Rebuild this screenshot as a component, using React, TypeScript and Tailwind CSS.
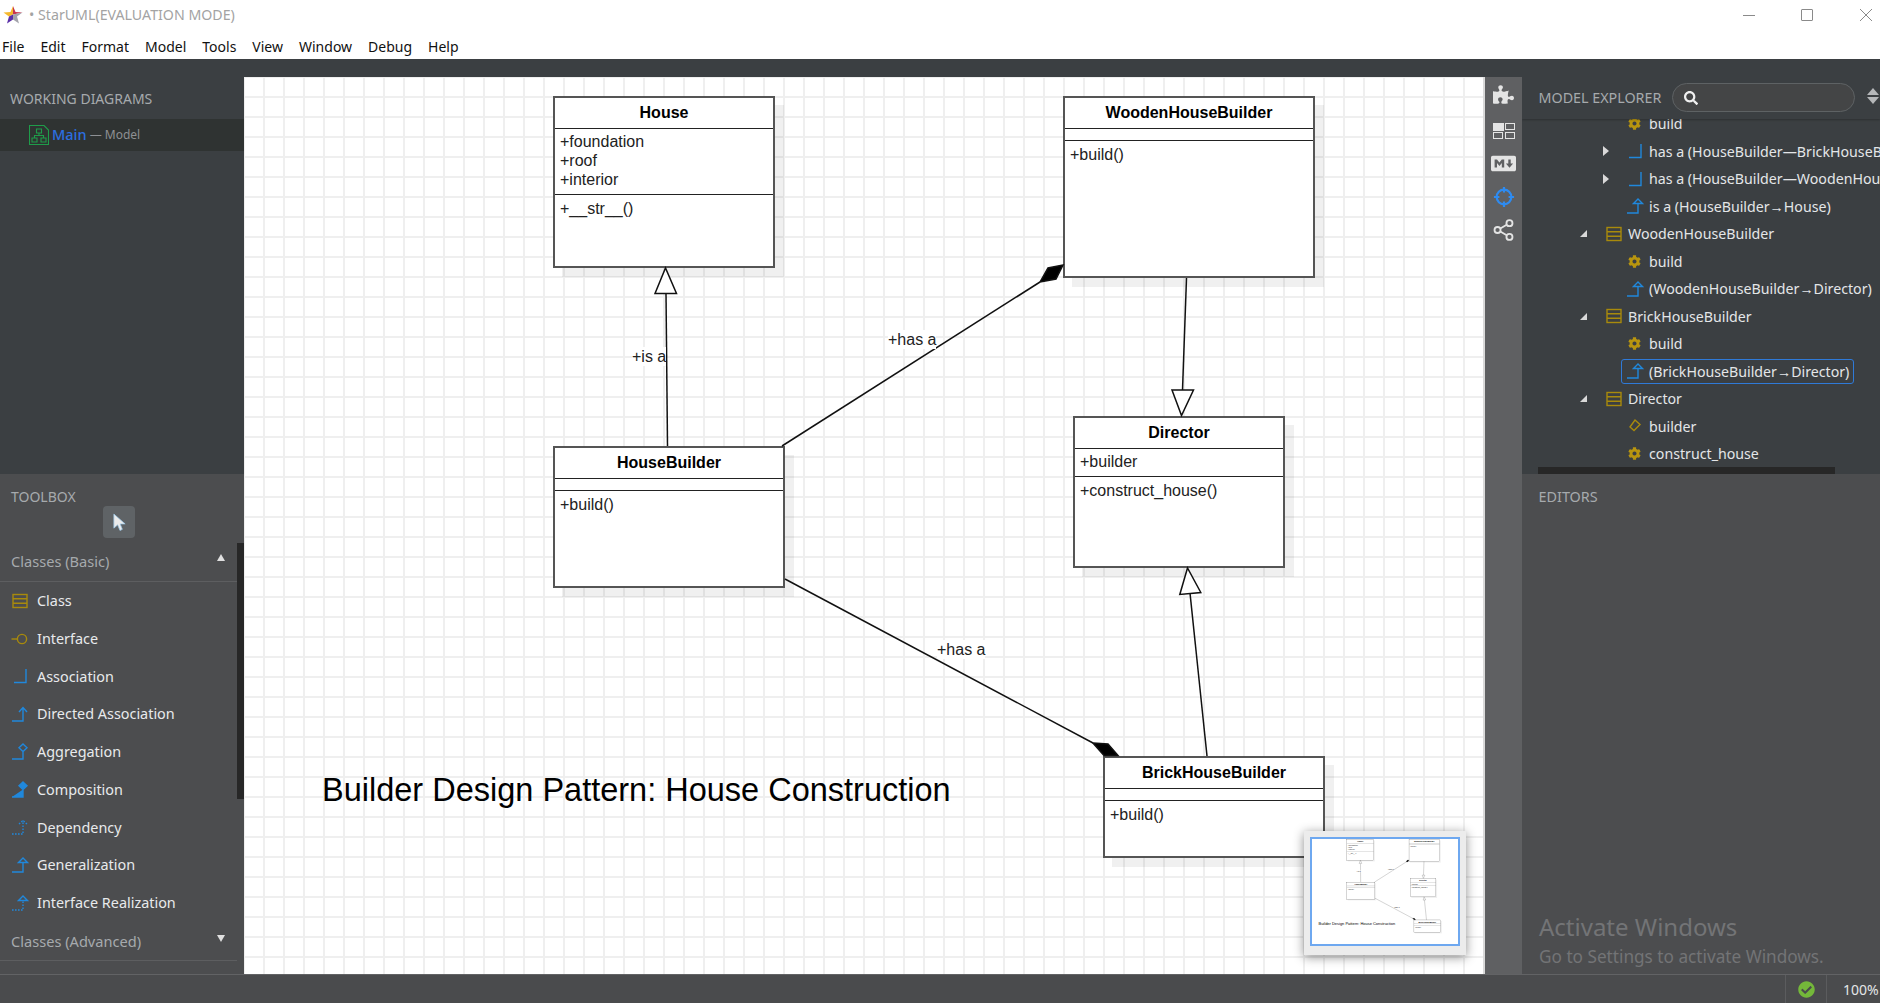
import { FaCheckCircle, FaCog, FaMarkdown, FaPuzzlePiece, FaSearch } from "react-icons/fa";

const ui = "font-['Noto_Sans',sans-serif]";
const arial = "font-['Liberation_Sans',Arial,sans-serif]";

const menus = ["File", "Edit", "Format", "Model", "Tools", "View", "Window", "Debug", "Help"];

const StarLogo = () => (
  <svg viewBox="0 0 20 20" className="w-[20px] h-[20px]">
    <polygon points="10,1 10,9.5 6,11.5 0.5,7.5 7.5,7" fill="#f5b82e" />
    <polygon points="10,1 12.5,7 19.5,7.5 10,9.5" fill="#c8344e" />
    <polygon points="19.5,7.5 14,11.5 16,18.5 10,14.5 10,9.5" fill="#a3a3ab" />
    <polygon points="6,11.5 4,18.5 10,14.5 10,9.5" fill="#5a2fa8" />
  </svg>
);

type IconKind = "class" | "interface" | "assoc" | "directed" | "aggregation" | "composition" | "dependency" | "generalization" | "realization" | "attr";

const ModelIcon = ({ kind }: { kind: IconKind }) => {
  const blue = "#2088dc";
  const gold = "#a88a0c";
  return (
    <svg viewBox="0 0 20 20" className="w-[20px] h-[20px] shrink-0" fill="none" strokeWidth="1.4">
      {kind === "class" && (
        <g stroke={gold}>
          <rect x="3" y="3.5" width="14" height="13" />
          <path d="M3 7.8H17M3 12.2H17" />
        </g>
      )}
      {kind === "interface" && (
        <g stroke={gold}>
          <path d="M1.5 10H7" />
          <circle cx="12" cy="10" r="4.6" />
        </g>
      )}
      {kind === "assoc" && <path d="M4 16.5H16V3" stroke={blue} />}
      {kind === "directed" && <path d="M2 17H13V3.5M9 8L13 3.5L17 8" stroke={blue} />}
      {kind === "aggregation" && <path d="M2 17H13V9.5M13 2L17 5.8L13 9.5L9 5.8Z" stroke={blue} />}
      {kind === "composition" && <path d="M2 17H13V9.5M13 2L17 5.8L13 9.5L9 5.8Z" stroke={blue} fill={blue} />}
      {kind === "dependency" && <path d="M2 17H13V3.5M9 7L13 3.5L17 7" stroke={blue} strokeDasharray="1.6 1.4" />}
      {kind === "generalization" && <path d="M2 17H13V7.5M8.5 7.5L13 3L17.5 7.5Z" stroke={blue} />}
      {kind === "realization" && (
        <g stroke={blue}>
          <path d="M2 17H13V7.5" strokeDasharray="1.6 1.4" />
          <path d="M8.5 7.5L13 3L17.5 7.5Z" />
        </g>
      )}
      {kind === "attr" && <path d="M10 4L15 8.5L9 14.5L5 11Z" stroke={gold} />}
    </svg>
  );
};

const toolItems: { label: string; icon: IconKind }[] = [
  { label: "Class", icon: "class" },
  { label: "Interface", icon: "interface" },
  { label: "Association", icon: "assoc" },
  { label: "Directed Association", icon: "directed" },
  { label: "Aggregation", icon: "aggregation" },
  { label: "Composition", icon: "composition" },
  { label: "Dependency", icon: "dependency" },
  { label: "Generalization", icon: "generalization" },
  { label: "Interface Realization", icon: "realization" },
];

type TreeRow = {
  label: string;
  level: 2 | 3;
  icon: IconKind | "gear";
  toggle?: "open" | "closed";
  selected?: boolean;
};

const treeRows: TreeRow[] = [
  { label: "build", level: 3, icon: "gear" },
  { label: "has a (HouseBuilder—BrickHouseBuilder)", level: 3, icon: "assoc", toggle: "closed" },
  { label: "has a (HouseBuilder—WoodenHouseBuilder)", level: 3, icon: "assoc", toggle: "closed" },
  { label: "is a (HouseBuilder→House)", level: 3, icon: "generalization" },
  { label: "WoodenHouseBuilder", level: 2, icon: "class", toggle: "open" },
  { label: "build", level: 3, icon: "gear" },
  { label: "(WoodenHouseBuilder→Director)", level: 3, icon: "generalization" },
  { label: "BrickHouseBuilder", level: 2, icon: "class", toggle: "open" },
  { label: "build", level: 3, icon: "gear" },
  { label: "(BrickHouseBuilder→Director)", level: 3, icon: "generalization", selected: true },
  { label: "Director", level: 2, icon: "class", toggle: "open" },
  { label: "builder", level: 3, icon: "attr" },
  { label: "construct_house", level: 3, icon: "gear" },
];

const UmlBox = ({
  name,
  attrs,
  ops,
  className,
}: {
  name: string;
  attrs: string[];
  ops: string[];
  className: string;
}) => (
  <div className={`absolute flex flex-col bg-white border-2 border-[#555] shadow-[9px_9px_0_rgba(0,0,0,0.06)] text-[16px] leading-[19px] text-[#222] ${className}`}>
    <div className="h-[31px] shrink-0 flex items-center justify-center pb-[2px] font-bold text-black border-b border-[#222]">
      {name}
    </div>
    <div className={`shrink-0 px-[5px] border-b border-[#222] ${attrs.length ? "pt-[3px] pb-[5px]" : "h-[12px]"}`}>
      {attrs.map((a) => (
        <div key={a}>{a}</div>
      ))}
    </div>
    <div className="px-[5px] py-[4px]">
      {ops.map((o) => (
        <div key={o}>{o}</div>
      ))}
    </div>
  </div>
);

const EdgeLabel = ({ text, className }: { text: string; className: string }) => (
  <div className={`absolute bg-white text-[16px] leading-[19px] text-[#222] ${className}`}>{text}</div>
);

// the class diagram, drawn at canvas size and reused (scaled) by the minimap
const Diagram = () => (
  <div className={`absolute left-0 top-0 w-[1241px] h-[897px] ${arial}`}>
    <UmlBox
      name="House"
      attrs={["+foundation", "+roof", "+interior"]}
      ops={["+__str__()"]}
      className="left-[309px] top-[19px] w-[222px] h-[172px]"
    />
    <UmlBox name="WoodenHouseBuilder" attrs={[]} ops={["+build()"]} className="left-[819px] top-[19px] w-[252px] h-[182px]" />
    <UmlBox name="HouseBuilder" attrs={[]} ops={["+build()"]} className="left-[309px] top-[369px] w-[232px] h-[142px]" />
    <UmlBox
      name="Director"
      attrs={["+builder"]}
      ops={["+construct_house()"]}
      className="left-[829px] top-[339px] w-[212px] h-[152px]"
    />
    <UmlBox name="BrickHouseBuilder" attrs={[]} ops={["+build()"]} className="left-[859px] top-[679px] w-[222px] h-[102px]" />
    <svg viewBox="244 77 1241 897" className="absolute inset-0 w-[1241px] h-[897px]" fill="none" stroke="#111" strokeWidth="1.5">
      <path d="M666 293L667.5 446" />
      <path d="M655 293.5L665.5 268L676.5 293.5Z" fill="#fff" />
      <path d="M782 446L1040 282" />
      <path d="M1040 282L1048 268L1063 265L1056 279Z" fill="#000" />
      <path d="M1186.5 278L1182.5 390" />
      <path d="M1172 390L1193.5 390L1181.5 415.5Z" fill="#fff" />
      <path d="M1190 593L1207 756" />
      <path d="M1187.5 568L1179.8 594.5L1200.8 592.5Z" fill="#fff" />
      <path d="M785 579L1093 743" />
      <path d="M1093 743L1108 744L1118 755.5L1104 755.5Z" fill="#000" />
    </svg>
    <EdgeLabel text="+is a" className="left-[388px] top-[270px]" />
    <EdgeLabel text="+has a" className="left-[644px] top-[253px]" />
    <EdgeLabel text="+has a" className="left-[693px] top-[563px]" />
    <div className="absolute left-[78px] top-[691px] text-[32.5px] leading-[44px] text-black whitespace-nowrap">
      Builder Design Pattern: House Construction
    </div>
  </div>
);

const Minimap = () => (
  <div className="absolute left-[1060px] top-[754px] w-[162px] h-[124px] bg-[#ececec] shadow-[0_2px_10px_rgba(0,0,0,0.45)] pl-[6px] pt-[6px]">
    <div className="relative w-[150px] h-[109px] bg-white border-2 border-[#6ea8f0] overflow-hidden">
      <div className="absolute left-[-3px] top-[-2px] w-[1241px] h-[897px] origin-top-left scale-[0.122]">
        <Diagram />
      </div>
    </div>
  </div>
);

const ToolRail = () => (
  <div className="w-[37px] bg-[#5f6062] flex flex-col items-center pt-[7px] text-[#e4e4e4]">
    <div className="h-[20px] flex items-center">
      <FaPuzzlePiece size={21} />
    </div>
    <svg viewBox="0 0 22 16" className="w-[22px] h-[16px] mt-[19px]" fill="none" stroke="#e4e4e4">
      <rect x="0.5" y="0.5" width="10" height="7" fill="#e4e4e4" />
      <rect x="12.5" y="0.5" width="9" height="6" />
      <rect x="0.5" y="9.5" width="9" height="6" />
      <rect x="12.5" y="9.5" width="9" height="6" />
    </svg>
    <div className="h-[20px] flex items-center mt-[14px]">
      <FaMarkdown size={25} />
    </div>
    <svg viewBox="0 0 24 24" className="w-[22px] h-[22px] mt-[13px]" fill="none" stroke="#2e8bf0" strokeWidth="2.4">
      <circle cx="12" cy="12" r="8" />
      <path d="M12 1V7M12 17V23M1 12H7M17 12H23" />
    </svg>
    <svg viewBox="0 0 22 24" className="w-[21px] h-[22px] mt-[11px]" fill="none" stroke="#e4e4e4" strokeWidth="2">
      <circle cx="17.5" cy="4.5" r="3.3" />
      <circle cx="4.5" cy="12" r="3.3" />
      <circle cx="17.5" cy="19.5" r="3.3" />
      <path d="M7.5 10.3L14.5 6.2M7.5 13.7L14.5 17.8" />
    </svg>
  </div>
);

const TreeLine = ({ row }: { row: TreeRow }) => (
  <div className={`h-[27.5px] flex items-center whitespace-nowrap ${row.level === 3 ? "pl-[78px]" : "pl-[57px]"}`}>
    <div className="w-[28px] shrink-0 flex items-center">
      {row.toggle === "closed" && (
        <div className="ml-[3px] w-0 h-0 border-y-[5px] border-y-transparent border-l-[6px] border-l-[#d9d9d9]" />
      )}
      {row.toggle === "open" && (
        <div className="ml-[1px] w-0 h-0 border-b-[7px] border-b-[#d9d9d9] border-l-[7px] border-l-transparent" />
      )}
    </div>
    <div
      className={`flex items-center h-[25px] ${
        row.selected ? "w-[233px] -ml-[7px] pl-[6px] border border-[#2f7ad8] rounded-[3px]" : ""
      }`}
    >
      <div className="w-[21px] shrink-0 flex items-center">
        {row.icon === "gear" ? (
          <FaCog size={13} className="text-[#b8950f]" />
        ) : (
          <div className="-ml-[3px]">
            <ModelIcon kind={row.icon} />
          </div>
        )}
      </div>
      <span className="text-[14.2px] text-[#e4e6e8]">{row.label}</span>
    </div>
  </div>
);

export default function App() {
  return (
    <div className={`w-[1880px] h-[1003px] flex flex-col overflow-hidden bg-white ${ui}`}>
      {/* title bar */}
      <div className="h-[30px] shrink-0 flex items-center pl-[3px]">
        <StarLogo />
        <span className="ml-[6px] text-[14.2px] text-[#a3a3a3]">• StarUML(EVALUATION MODE)</span>
        <div className="ml-auto flex items-center">
          <div className="w-[12px] h-px bg-[#8a8a8a]" />
          <div className="ml-[46px] w-[12px] h-[12px] border border-[#8a8a8a] rounded-[1px]" />
          <svg viewBox="0 0 12 12" className="ml-[47px] mr-[8px] w-[12px] h-[12px]" stroke="#8a8a8a">
            <path d="M0 0L12 12M12 0L0 12" />
          </svg>
        </div>
      </div>

      {/* menu bar */}
      <div className="h-[29px] shrink-0 flex items-center gap-[16px] pl-[2px] pt-[4px] text-[14px] text-[#111]">
        {menus.map((m) => (
          <span key={m}>{m}</span>
        ))}
      </div>

      <div className="flex-1 flex min-h-0">
        {/* left column */}
        <div className="w-[244px] shrink-0 flex flex-col">
          <div className="h-[415px] shrink-0 bg-[#3b3f42] pt-[30px]">
            <div className="pl-[10px] mb-[10px] text-[14px] leading-[20px] text-[#a6aaad]">WORKING DIAGRAMS</div>
            <div className="h-[32px] bg-[#2f3332] flex items-center pl-[29px] whitespace-nowrap">
              <svg viewBox="0 0 20 20" className="w-[20px] h-[20px]" fill="none" stroke="#1f9c4a" strokeWidth="1.1">
                <path d="M0.5 0.5H15L19.5 5V19.5H0.5Z" />
                <path d="M7.5 4H12.5V8H7.5ZM3 13H8V17H3ZM12 13H17V17H12ZM10 8V10.5M5.5 13V10.5H14.5V13" />
              </svg>
              <span className="ml-[3px] text-[14.5px] font-medium text-[#2b6fe0]">Main</span>
              <span className="ml-[3px] text-[12px] text-[#8e9093]">— Model</span>
            </div>
          </div>

          <div className="relative flex-1 min-h-0 bg-[#4c4d4f] overflow-hidden">
            <div className="pl-[11px] pt-[13px] text-[14px] leading-[20px] text-[#a6aaad]">TOOLBOX</div>
            <div className="ml-[103px] mt-[-1px] w-[32px] h-[32px] rounded-[4px] bg-[#5f6366] flex items-center justify-center">
              <svg viewBox="0 0 16 20" className="w-[15px] h-[19px]" fill="#ececec" stroke="#9cc8e8" strokeWidth="0.8">
                <path d="M2 1V16L6 12.5L8.5 18.5L11 17.3L8.7 11.5H14Z" />
              </svg>
            </div>
            <div className="w-[237px]">
              <div className="h-[44px] flex items-center justify-between pl-[11px] pr-[12px] pt-[4px] border-b border-[#5d5e60] text-[14.6px] text-[#a6aaad]">
                <span>Classes (Basic)</span>
                <span className="w-0 h-0 mb-[8px] border-x-[4px] border-x-transparent border-b-[7px] border-b-[#e0e0e0]" />
              </div>
              {toolItems.map((t) => (
                <div key={t.label} className="h-[37.75px] flex items-center pl-[10px] whitespace-nowrap">
                  <ModelIcon kind={t.icon} />
                  <span className="ml-[7px] text-[14.4px] text-[#e8eaec]">{t.label}</span>
                </div>
              ))}
              <div className="h-[39px] flex items-center justify-between pl-[11px] pr-[12px] pt-[3px] border-b border-[#5d5e60] text-[14.6px] text-[#a6aaad]">
                <span>Classes (Advanced)</span>
                <span className="w-0 h-0 mb-[8px] border-x-[4px] border-x-transparent border-t-[7px] border-t-[#e0e0e0]" />
              </div>
            </div>
            <div className="absolute right-0 top-[69px] w-[7px] h-[256px] bg-[#272727]" />
          </div>
        </div>

        {/* center column */}
        <div className="w-[1278px] shrink-0 flex flex-col">
          <div className="h-[18px] shrink-0 bg-[#3b3f42]" />
          <div className="flex-1 min-h-0 flex">
            <div className="relative w-[1241px] overflow-hidden border-r-2 border-[#d9d9d9] bg-white bg-[linear-gradient(to_right,#efefef_2px,transparent_2px),linear-gradient(to_bottom,#efefef_2px,transparent_2px)] bg-[size:20px_20px] bg-[position:19px_19px]">
              <Diagram />
              <Minimap />
            </div>
            <ToolRail />
          </div>
        </div>

        {/* right column */}
        <div className="flex-1 min-w-0 flex flex-col">
          <div className="relative h-[415px] shrink-0 bg-[#3b3f42] flex flex-col overflow-hidden">
            <div className="relative z-10 h-[60px] shrink-0 bg-[#3b3f42] shadow-[0_1px_2px_rgba(0,0,0,0.25)] flex items-center pt-[18px] pl-[16.5px]">
              <span className="text-[14.3px] text-[#a6aaad] whitespace-nowrap">MODEL EXPLORER</span>
              <div className="absolute left-[150px] top-[24px] w-[183px] h-[29px] rounded-full bg-[#444546] border border-[#5e6264] flex items-center pl-[11px]">
                <FaSearch size={14} className="text-[#f0f0f0]" />
              </div>
              <div className="absolute left-[345px] top-[29px] flex flex-col gap-[2px]">
                <span className="w-0 h-0 border-x-[6px] border-x-transparent border-b-[7px] border-b-[#b5b7b9]" />
                <span className="w-0 h-0 border-x-[6px] border-x-transparent border-t-[7px] border-t-[#b5b7b9]" />
              </div>
            </div>
            <div className="flex-1 min-h-0 -mt-[9px]">
              {treeRows.map((r, i) => (
                <TreeLine key={i} row={r} />
              ))}
            </div>
            <div className="absolute left-[16px] bottom-0 w-[297px] h-[7px] bg-[#272727]" />
          </div>
          <div className="relative flex-1 min-h-0 bg-[#4c4d4f] pl-[16.5px] pt-[13px]">
            <div className="text-[14.4px] leading-[20px] text-[#a6aaad]">EDITORS</div>
            <div className="absolute left-[17px] top-[439px] text-[24px] leading-[28px] text-[#737476] whitespace-nowrap">Activate Windows</div>
            <div className="absolute left-[17px] top-[472px] text-[17.2px] leading-[22px] text-[#737476] whitespace-nowrap">Go to Settings to activate Windows.</div>
          </div>
        </div>
      </div>

      {/* status bar */}
      <div className="h-[29px] shrink-0 bg-[#4a4b4d] border-t border-[#626365] flex items-stretch justify-end">
        <div className="w-[41px] border-l border-[#5b5c5e] flex items-center justify-center">
          <FaCheckCircle size={17} className="text-[#74b83a]" />
        </div>
        <div className="w-[54px] border-l border-[#5b5c5e] pl-[16px] flex items-center text-[14px] text-[#e4e6e8] whitespace-nowrap">100%</div>
      </div>
    </div>
  );
}
